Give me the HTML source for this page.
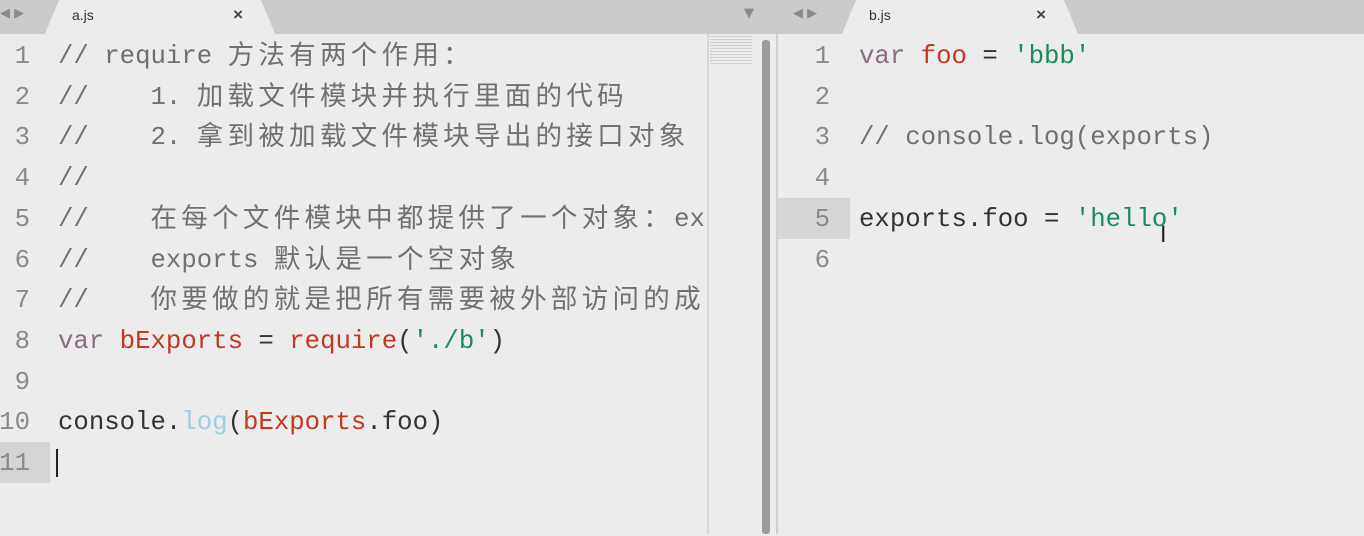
<!DOCTYPE html>
<html><head><meta charset="utf-8"><style>
body{margin:0;width:1364px;height:534px;overflow:hidden;background:#ececec;position:relative;font-family:"Liberation Mono",monospace;}
.bar{position:absolute;left:0;top:0;width:1364px;height:34px;background:#cbcbcb;}
.tab{position:absolute;top:0;height:34px;background:#ececec;clip-path:polygon(14px 0,calc(100% - 14px) 0,100% 100%,0 100%);font-family:"Liberation Sans",sans-serif;font-size:14px;color:#333;}
.tab .t{position:absolute;left:27px;top:7px}
.tab .x{position:absolute;right:32px;top:5px;font-size:17px;font-weight:bold;color:#444}
.arr{position:absolute;top:6px;color:#8a8a8a;font-size:13px;font-family:"DejaVu Sans",sans-serif}
.ln{position:absolute;height:40.7px;line-height:40.7px;font-size:25.7px;white-space:pre;}
.num{color:#8a8a8a;text-align:right}
.c{color:#707070}.k{color:#8b6c88}.r{color:#c2391f}.s{color:#1b8a5e}.p{color:#333}.l{color:#9fcbe0}
.z{font-family:"Noto Sans CJK SC",sans-serif;font-size:26.5px;letter-spacing:4.3px;line-height:0;vertical-align:-1px}
</style></head><body>
<div class="bar"></div>
<div class="arr" style="left:0">◀ ▶</div>
<div class="tab" style="left:45px;width:230px"><span class="t">a.js</span><span class="x">×</span></div>
<div class="arr" style="left:744px">▼</div>
<div class="arr" style="left:793px">◀ ▶</div>
<div class="tab" style="left:842px;width:236px"><span class="t">b.js</span><span class="x">×</span></div>

<div style="position:absolute;left:0;top:442px;width:50px;height:40.7px;background:#d4d4d4"></div>
<div style="position:absolute;left:56px;top:449px;width:2px;height:28px;background:#222"></div>
<div style="position:absolute;left:707px;top:34px;width:2px;height:500px;background:#d8d8d8"></div>
<div style="position:absolute;left:710px;top:36px;width:42px;height:30px;background:repeating-linear-gradient(#bbb 0 1px,transparent 1px 3px);opacity:.6"></div>
<div style="position:absolute;left:762px;top:40px;width:8px;height:494px;background:#9b9b9b;border-radius:3px"></div>
<div style="position:absolute;left:776px;top:34px;width:2px;height:500px;background:#d0d0d0"></div>
<div style="position:absolute;left:778px;top:198px;width:72px;height:40.7px;background:#d6d6d6"></div>
<div style="position:absolute;left:1160px;top:225px;font-size:22px;line-height:22px;color:#222;font-family:'DejaVu Sans'">I</div>

<div style="position:absolute;left:0;top:2px;width:1364px;height:532px">
<div class="ln num" style="left:0;width:30px;top:35px">1</div>
<div class="ln num" style="left:0;width:30px;top:75.7px">2</div>
<div class="ln num" style="left:0;width:30px;top:116.4px">3</div>
<div class="ln num" style="left:0;width:30px;top:157.1px">4</div>
<div class="ln num" style="left:0;width:30px;top:197.8px">5</div>
<div class="ln num" style="left:0;width:30px;top:238.5px">6</div>
<div class="ln num" style="left:0;width:30px;top:279.2px">7</div>
<div class="ln num" style="left:0;width:30px;top:319.9px">8</div>
<div class="ln num" style="left:0;width:30px;top:360.6px">9</div>
<div class="ln num" style="left:-2px;width:32px;top:401.3px">10</div>
<div class="ln num" style="left:-2px;width:32px;top:442px">11</div>

<div style="position:absolute;left:0;top:0;width:707px;height:534px;overflow:hidden">
<div class="ln c" style="left:58px;top:35px">// require <span class="z">方法有两个作用：</span></div>
<div class="ln c" style="left:58px;top:75.7px">//    1. <span class="z">加载文件模块并执行里面的代码</span></div>
<div class="ln c" style="left:58px;top:116.4px">//    2. <span class="z">拿到被加载文件模块导出的接口对象</span></div>
<div class="ln c" style="left:58px;top:157.1px">//</div>
<div class="ln c" style="left:58px;top:197.8px">//    <span class="z">在每个文件模块中都提供了一个对象：</span>exports</div>
<div class="ln c" style="left:58px;top:238.5px">//    exports <span class="z">默认是一个空对象</span></div>
<div class="ln c" style="left:58px;top:279.2px">//    <span class="z">你要做的就是把所有需要被外部访问的成员</span></div>
<div class="ln" style="left:58px;top:319.9px"><span class="k">var</span> <span class="r">bExports</span> <span class="p">=</span> <span class="r">require</span><span class="p">(</span><span class="s">'./b'</span><span class="p">)</span></div>
<div class="ln" style="left:58px;top:401.3px"><span class="p">console.</span><span class="l">log</span><span class="p">(</span><span class="r">bExports</span><span class="p">.foo)</span></div>
</div>

<div class="ln num" style="left:790px;width:40px;top:35px">1</div>
<div class="ln num" style="left:790px;width:40px;top:75.7px">2</div>
<div class="ln num" style="left:790px;width:40px;top:116.4px">3</div>
<div class="ln num" style="left:790px;width:40px;top:157.1px">4</div>
<div class="ln num" style="left:790px;width:40px;top:197.8px">5</div>
<div class="ln num" style="left:790px;width:40px;top:238.5px">6</div>
<div class="ln" style="left:859px;top:35px"><span class="k">var</span> <span class="r">foo</span> <span class="p">=</span> <span class="s">'bbb'</span></div>
<div class="ln c" style="left:859px;top:116.4px">// console.log(exports)</div>
<div class="ln" style="left:859px;top:197.8px"><span class="p">exports.foo =</span> <span class="s">'hello'</span></div>
</div>
</body></html>
